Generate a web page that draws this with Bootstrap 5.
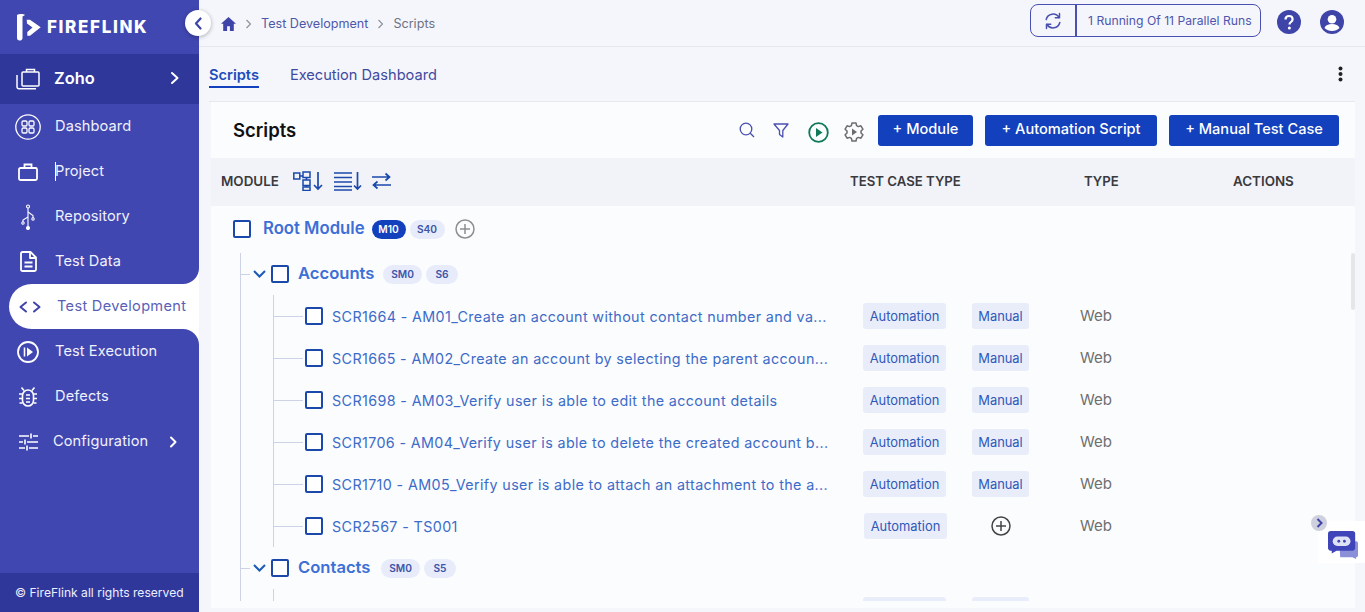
<!DOCTYPE html>
<html lang="en">
<head>
  <meta charset="UTF-8">
  <meta name="viewport" content="width=device-width, initial-scale=1.0">
  <title>FireFlink Scripts</title>
  <link rel="stylesheet" href="https://cdn.jsdelivr.net/npm/bootstrap@5.3.0/dist/css/bootstrap.min.css">
  <style>
    html, body { height: 100%; overflow: hidden; }
    body { font-family: Inter, "Liberation Sans", sans-serif; background: #f4f6fb; }
    .ff-app { height: 612px; }

    /* sidebar */
    .ff-side { width: 199px; background: #4147b1; color: #fff; position: relative; }
    .ff-logo { height: 54px; padding-left: 16px; gap: 4px; }
    .ff-logo-text { font-weight: 800; font-size: 17px; letter-spacing: 1.65px; padding-top: 2px; }
    .ff-project { height: 50px; background: #2f379b; padding-left: 16px; padding-right: 19px; padding-bottom: 2px; font-weight: 600; font-size: 16.4px; }
    .ff-project span { margin-left: 14px; }
    .ff-item { height: 45px; padding-left: 15px; font-size: 14.6px; color: #f0f1fb; letter-spacing: .1px; position: relative; }
    .ff-item svg { flex: none; }
    .ff-ico { width: 26px; display: flex; justify-content: center; margin-right: 14px; }
    .ff-caret { width: 1px; height: 19px; background: #fff; margin-right: -1px; }
    .ff-item.ff-on { background: #fff; color: #5a5fb5; margin-left: 9px; padding-left: 8px; border-radius: 23px 0 0 23px; letter-spacing: .3px; }
    .ff-item.ff-on::before, .ff-item.ff-on::after { content: ""; position: absolute; right: 0; width: 16px; height: 16px; background: #4147b1; box-shadow: 0 0 0 16px #fff; clip-path: inset(0); }
    .ff-item.ff-on::before { top: -16px; border-bottom-right-radius: 16px; }
    .ff-item.ff-on::after { bottom: -16px; border-top-right-radius: 16px; }
    .ff-conf { padding-right: 21px; }
    .ff-conf .ff-ico { margin-right: 12px; }
    .ff-side-foot { height: 39px; background: #2f379b; font-size: 12.1px; padding-left: 15px; padding-top: 2px; color: #eef; }
    .ff-collapse { position: absolute; left: 185px; top: 10px; width: 26px; height: 26px; border-radius: 50%; background: #fff; box-shadow: 0 1px 4px rgba(0,0,0,.3); z-index: 3; }

    /* top bar */
    .ff-main { min-width: 0; position: relative; }
    .ff-top { height: 47px; border-bottom: 1px solid #e6e8ef; padding-left: 22px; padding-right: 21px; }
    .ff-crumb { font-size: 12.6px; color: #4f58a8; gap: 9px; padding-top: 2px; }
    .ff-crumb .ff-last { color: #6d7283; }
    .ff-runs { height: 33px; margin-top: -5px; border: 1px solid #4a50b0; border-radius: 8px; color: #4f55ad; font-size: 12.2px; margin-right: 16px; }
    .ff-runs-ico { width: 46px; border-right: 2px solid #4a50b0; }
    .ff-runs-txt { width: 183px; padding-left: 11px; padding-top: 1px; }
    .ff-top-ico { gap: 19px; margin-top: -3px; }

    /* tabs */
    .ff-tabs { height: 55px; margin-left: 10px; margin-right: 10px; border-bottom: 1px solid #e6e8ef; padding-right: 12px; font-size: 14.6px; }
    .ff-tab { color: #3f4a9f; margin-right: 31px; padding: 2px 0 0; height: 25px; margin-top: 2px; }
    .ff-tab.ff-on { color: #1d4dbb; font-weight: 600; border-bottom: 2px solid #1340bd; }

    /* card */
    .ff-card { margin-left: 12px; margin-right: 10px; height: 506px; background: #fbfcfe; border: 0; border-radius: 0; }
    .ff-card-head { height: 56px; padding-left: 22px; padding-right: 16px; }
    .ff-title { font-size: 18.5px; font-weight: 600; color: #111; padding-top: 1px; }
    .ff-tools { margin-right: 2px; }
    .ff-tools svg:nth-child(1) { margin-right: 18px; }
    .ff-tools svg:nth-child(2) { margin-right: 19px; }
    .ff-tools svg:nth-child(3) { margin-right: 15px; }
    .ff-btn { background: #1340bd; color: #fff; font-size: 14.6px; font-weight: 500; height: 31px; padding: 0; border-radius: 3px; border: 0; margin-left: 12px; }
    .ff-btn:hover { background: #1340bd; color: #fff; }
    .ff-b1 { width: 95px; } .ff-b2 { width: 172px; } .ff-b3 { width: 170px; }
    .ff-thead { height: 48px; padding-bottom: 1px; background: #f1f3f9; font-size: 13.4px; font-weight: 600; color: #3a3a3e; }
    .ff-c1 { width: 639px; padding-left: 10px; gap: 10px; }
    .ff-c1 span { margin-right: 4px; }
    .ff-c2 { width: 234px; font-size: 13.2px; } .ff-c3 { width: 149px; font-size: 13.2px; }

    /* tree */
    .ff-tree { height: 395px; overflow: hidden; position: relative; }
    .ff-root { height: 47px; padding-left: 22px; padding-bottom: 1px; }
    .ff-check { width: 18px; height: 18px; border: 2px solid #1a49ab; border-radius: 2px; flex: none; background: #fff; }
    .ff-root-name { font-size: 16.7px; font-weight: 600; color: #3d6fd6; margin-left: 12px; margin-right: 7px; }
    .ff-pill { font-size: 10.2px; font-weight: 600; border-radius: 10px; background: #e8ecfa; color: #3d55a8; height: 19px; padding: 0; display: inline-flex; align-items: center; justify-content: center; margin-right: 4px; }
    .ff-pill.ff-dark { background: #1340bd; color: #fff; }
    .ff-p34 { width: 34px; } .ff-p35 { width: 35px; } .ff-p39 { width: 39px; } .ff-p32 { width: 32px; }
    .ff-root-add { margin-left: 6px; }
    .ff-branch { margin-left: 29px; border-left: 1px solid #cdd2e6; }
    .ff-mod { height: 42px; }
    .ff-dash { height: 1px; background: #cdd2e6; flex: none; }
    .ff-d10 { width: 9px; }
    .ff-d29 { width: 29px; margin-right: 2px; }
    .ff-fold { margin-left: 3px; margin-right: 5px; flex: none; }
    .ff-mod-name { font-size: 16.6px; font-weight: 600; color: #3d6fd6; margin-left: 9px; width: 85px; margin-top: -2px; }
    .ff-mod-short { width: 83px; }
    .ff-sub { margin-left: 32px; border-left: 1px solid #cdd2e6; }
    .ff-row { height: 42px; }
    .ff-name { width: 499px; margin-left: 9px; margin-right: 32px; font-size: 14.3px; color: #3d6bc8; letter-spacing: .38px; flex: none; padding-top: 1px; }
    .ff-tag { background: #e9edfa; color: #2f58b8; font-size: 12.9px; height: 26px; padding-top: 1px; border-radius: 3px; display: inline-flex; align-items: center; justify-content: center; flex: none; }
    .ff-t1 { width: 83px; margin-right: 26px; }
    .ff-t2 { width: 57px; margin-right: 51px; }
    .ff-t1b { margin-left: 1px; margin-right: 44px; }
    .ff-plus-cell { width: 20px; margin-right: 69px; flex: none; display: flex; }
    .ff-web { font-size: 15px; color: #6e6e6e; padding-top: 1px; }

    .ff-thumb { position: absolute; right: 10px; top: 253px; width: 4px; height: 57px; background: #e5e6e8; border-radius: 2px; }
    .ff-chat { position: absolute; right: 0; top: 521px; width: 47px; height: 42px; background: #fff; z-index: 2; padding-top: 6px; padding-left: 3px; }
    .ff-chat-btn { position: absolute; left: 1112px; top: 515px; width: 16px; height: 16px; border-radius: 50%; background: #ced1dd; z-index: 3; }
  </style>
</head>
<body>
  <div class="ff-app d-flex">
    <aside class="ff-side d-flex flex-column flex-shrink-0">
      <div class="ff-logo d-flex align-items-center">
        <svg width="27" height="28" viewBox="0 0 27 28"><path d="M1 2C3 1 7 .5 9 2L6.500 3.500V25C6.500 27 5 27.500 3.500 27.500 2 27.500 1 26.500 1 25Z" fill="#fff"/><path d="M10.700 6.700H14L24.700 14.300 14 22.700H11.300V19L16.500 14.500 11 10.500Z" fill="#fff"/></svg>
        <span class="ff-logo-text">FIREFLINK</span>
      </div>
      <div class="ff-project d-flex align-items-center">
        <svg width="24" height="24" viewBox="0 0 24 24" fill="none" stroke="#fff" stroke-width="1.500"><rect x="6" y="6" width="17" height="14" rx="1"/><path d="M10.500 6V3.500h8V6"/><path d="M1 9v11.500c0 1.500.8 2.300 2 2.300h17"/></svg>
        <span class="flex-grow-1">Zoho</span>
        <svg width="10" height="14" viewBox="0 0 10 14" fill="none" stroke="#fff" stroke-width="2" stroke-linecap="round" stroke-linejoin="round"><path d="M2 2l5.500 5L2 12"/></svg>
      </div>
      <div class="flex-grow-1">
        <div class="ff-item d-flex align-items-center">
          <span class="ff-ico"><svg width="26" height="26" viewBox="0 0 26 26" fill="none" stroke="#fff" stroke-width="1.300"><circle cx="13" cy="13" r="12.200"/><rect x="7" y="7" width="5" height="5" rx="1.200"/><rect x="14" y="7" width="5" height="5" rx="1.200"/><rect x="7" y="14" width="5" height="5" rx="1.200"/><rect x="14" y="14" width="5" height="5" rx="1.200"/></svg></span>
          Dashboard
        </div>
        <div class="ff-item d-flex align-items-center">
          <span class="ff-ico"><svg width="20" height="18" viewBox="0 0 20 18" fill="none" stroke="#fff" stroke-width="1.800"><rect x="1" y="5" width="18" height="12" rx="1.500"/><path d="M6.500 5V1.500h7V5"/></svg></span>
          <span class="ff-caret"></span>Project
        </div>
        <div class="ff-item d-flex align-items-center">
          <span class="ff-ico"><svg width="16" height="26" viewBox="0 0 16 26" fill="none" stroke="#fff" stroke-width="1.100"><circle cx="8" cy="2.500" r="1.500"/><path d="M8 4v19"/><circle cx="8" cy="24" r="1.500" fill="#fff"/><path d="M8 8l5 3.500V14M8 13l-5 3v2"/><circle cx="13" cy="15" r="1.200"/><circle cx="3" cy="19" r="1.200"/></svg></span>
          Repository
        </div>
        <div class="ff-item d-flex align-items-center">
          <span class="ff-ico"><svg width="17" height="21" viewBox="0 0 17 21" fill="none" stroke="#fff" stroke-width="1.800" stroke-linejoin="round"><path d="M2.500 1H10.500L16 6.500V18.500a1.500 1.500 0 0 1-1.500 1.500H2.500A1.500 1.500 0 0 1 1 18.500V2.500A1.500 1.500 0 0 1 2.500 1Z"/><path d="M10 1v6h6" /><path d="M4.500 11.500h8M4.500 15.500h8"/></svg></span>
          Test Data
        </div>
        <div class="ff-item ff-on d-flex align-items-center">
          <span class="ff-ico"><svg width="22" height="12" viewBox="0 0 22 12" fill="none" stroke="#3f45a8" stroke-width="2" stroke-linecap="round" stroke-linejoin="round"><path d="M7 1.500L1.500 6 7 10.500M15 1.500L20.500 6 15 10.500"/></svg></span>
          Test Development
        </div>
        <div class="ff-item d-flex align-items-center">
          <span class="ff-ico"><svg width="22" height="22" viewBox="0 0 22 22" fill="none" stroke="#fff" stroke-width="1.800"><circle cx="11" cy="11" r="10"/><path d="M7.500 6.500v9" stroke-width="1.600"/><path d="M10 6.500L16 11l-6 4.500Z" fill="#fff" stroke="none"/></svg></span>
          Test Execution
        </div>
        <div class="ff-item d-flex align-items-center">
          <span class="ff-ico"><svg width="20" height="21" viewBox="0 0 20 21" fill="none" stroke="#fff" stroke-width="1.600"><rect x="4.500" y="4" width="11" height="16" rx="5.500"/><path d="M6 4.500L3.500 1.500M14 4.500l2.500-3M4.500 8H1M4.500 12.500H1M4.500 17H1.500M15.500 8H19M15.500 12.500H19M15.500 17h3M8 9h4M8 12.500h4M8 16h4"/></svg></span>
          Defects
        </div>
        <div class="ff-item ff-conf d-flex align-items-center">
          <span class="ff-ico"><svg width="19" height="18" viewBox="0 0 19 18" fill="none" stroke="#fff" stroke-width="1.600"><path d="M0 3h10M14 3h5M0 9h4M8 9h11M0 15h6M10 15h9M12 .5v5M6 6.500v5M8 12.500v5"/></svg></span>
          <span class="flex-grow-1">Configuration</span>
          <svg width="9" height="12" viewBox="0 0 9 12" fill="none" stroke="#fff" stroke-width="2" stroke-linecap="round" stroke-linejoin="round"><path d="M2 1.500L6.500 6 2 10.500"/></svg>
        </div>
      </div>
      <div class="ff-side-foot d-flex align-items-center">© FireFlink all rights reserved</div>
      <div class="ff-collapse d-flex align-items-center justify-content-center">
        <svg width="9" height="13" viewBox="0 0 9 13" fill="none" stroke="#3f45a8" stroke-width="2.200" stroke-linecap="round" stroke-linejoin="round"><path d="M6.500 1.500L2 6.500l4.500 5"/></svg>
      </div>
    </aside>

    <main class="ff-main flex-grow-1">
      <div class="ff-top d-flex align-items-center justify-content-between">
        <div class="ff-crumb d-flex align-items-center">
          <svg width="15" height="14" viewBox="0 0 15 14" fill="#3f45a8"><path d="M7.500 0L0 6.800h2.200V14h3.900V9.200h2.800V14h3.900V6.800H15Z"/></svg>
          <svg width="7" height="10" viewBox="0 0 7 10" fill="none" stroke="#8b8e99" stroke-width="1.100"><path d="M1.500 1l4 4-4 4"/></svg>
          <span>Test Development</span>
          <svg width="7" height="10" viewBox="0 0 7 10" fill="none" stroke="#8b8e99" stroke-width="1.100"><path d="M1.500 1l4 4-4 4"/></svg>
          <span class="ff-last">Scripts</span>
        </div>
        <div class="d-flex align-items-center">
          <div class="ff-runs d-flex align-items-stretch">
            <div class="ff-runs-ico d-flex align-items-center justify-content-center">
              <svg width="18" height="18" viewBox="0 0 18 18" fill="none" stroke="#4a50b0" stroke-width="1.500" stroke-linecap="round" stroke-linejoin="round"><path d="M2.200 7.500A7 7 0 0 1 15 5.500M15.800 10.500A7 7 0 0 1 3 12.500"/><path d="M15.500 1.500v4.200h-4.200M2.500 16.500v-4.200h4.200"/></svg>
            </div>
            <div class="ff-runs-txt d-flex align-items-center">1 Running Of 11 Parallel Runs</div>
          </div>
          <div class="ff-top-ico d-flex align-items-center">
            <svg width="24" height="24" viewBox="0 0 24 24"><circle cx="12" cy="12" r="12" fill="#3f45a8"/><path d="M8.500 9.500c0-2.200 1.600-3.500 3.600-3.500s3.500 1.300 3.500 3.200c0 2.800-3.100 2.800-3.100 5.200" fill="none" stroke="#fff" stroke-width="2.200"/><circle cx="12.400" cy="18" r="1.500" fill="#fff"/></svg>
            <svg width="24" height="24" viewBox="0 0 24 24"><circle cx="12" cy="12" r="12" fill="#3f45a8"/><circle cx="12" cy="9.300" r="4.300" fill="#fff"/><path d="M4.500 18c1-3 4-4 7.500-4s6.500 1 7.500 4c-2 2-4.500 3-7.500 3s-5.500-1-7.500-3Z" fill="#fff"/></svg>
          </div>
        </div>
      </div>

      <div class="ff-tabs d-flex align-items-center">
        <div class="ff-tab ff-on">Scripts</div>
        <div class="ff-tab flex-grow-1">Execution Dashboard</div>
        <svg width="5" height="16" viewBox="0 0 5 16" fill="#222"><circle cx="2.500" cy="2.500" r="2"/><circle cx="2.500" cy="8" r="2"/><circle cx="2.500" cy="13.500" r="2"/></svg>
      </div>

      <div class="card ff-card">
        <div class="ff-card-head d-flex align-items-center">
          <div class="ff-title flex-grow-1">Scripts</div>
          <div class="ff-tools d-flex align-items-center">
            <svg width="16" height="16" viewBox="0 0 16 16" fill="none" stroke="#4a50b0" stroke-width="1.300"><circle cx="7" cy="7" r="5.800"/><path d="M11.300 11.300L15 15"/></svg>
            <svg width="16" height="15" viewBox="0 0 16 15" fill="none" stroke="#4a50b0" stroke-width="1.300" stroke-linejoin="round"><path d="M1 1h14L9.800 7.500v6.500L6.500 11.500V7.500Z"/></svg>
            <svg width="21" height="21" viewBox="0 0 21 21" fill="none" stroke="#0f7a55" stroke-width="1.800" class="mt-1"><circle cx="10.500" cy="10.500" r="9.300"/><path d="M8 6l6.500 4.500L8 15Z" fill="#0f7a55" stroke="none"/></svg>
            <svg width="20" height="20" viewBox="0 0 20 20" fill="none" stroke="#6c6c6c" stroke-width="1.500" stroke-linejoin="round" class="mt-1"><path d="M8 1h4l.6 2.600 1.800 1 2.500-.8 2 3.400-1.900 1.800v2l1.900 1.800-2 3.400-2.500-.8-1.800 1-.6 2.600H8l-.6-2.600-1.800-1-2.500.8-2-3.400L3 11V9L1.100 7.200l2-3.400 2.500.8 1.800-1Z"/><path d="M8 6.500l5 3.500-5 3.500Z" fill="#6c6c6c" stroke="none"/></svg>
          </div>
          <button type="button" class="btn ff-btn ff-b1">+ Module</button>
          <button type="button" class="btn ff-btn ff-b2">+ Automation Script</button>
          <button type="button" class="btn ff-btn ff-b3">+ Manual Test Case</button>
        </div>

        <div class="ff-thead d-flex align-items-center">
          <div class="ff-c1 d-flex align-items-center">
            <span>MODULE</span>
            <svg width="31" height="20" viewBox="0 0 31 20" fill="none" stroke="#1a49ab" stroke-width="1.500"><rect x=".8" y="2" width="6" height="6"/><rect x="10" y="1" width="7" height="5.500"/><rect x="10" y="9" width="7" height="5.500"/><rect x="10" y="16" width="7" height="3.500"/><path d="M7 5h3M13.500 6.500v2.500M13.500 14.500V16M25 1v16M21 14l4 4 4-4" stroke-width="1.700"/></svg>
            <svg width="28" height="20" viewBox="0 0 28 20" fill="none" stroke="#1a49ab" stroke-width="1.700"><path d="M0 2h18M0 6.500h18M0 11h18M0 15.500h18M0 19h18M23.500 1v16.500M20 14.500l3.500 3.500 3.500-3.500"/></svg>
            <svg width="19" height="18" viewBox="0 0 19 18" fill="none" stroke="#1a49ab" stroke-width="1.700"><path d="M0 5h17M13.500 1.500L17.500 5l-4 3.500M19 13H2M5.500 9.500L1.500 13l4 3.500"/></svg>
          </div>
          <div class="ff-c2">TEST CASE TYPE</div>
          <div class="ff-c3">TYPE</div>
          <div>ACTIONS</div>
        </div>

        <div class="ff-tree">
          <div class="ff-root d-flex align-items-center">
            <span class="ff-check"></span>
            <span class="ff-root-name">Root Module</span>
            <span class="badge ff-pill ff-dark ff-p34">M10</span>
            <span class="badge ff-pill ff-p35">S40</span>
            <svg class="ff-root-add" width="20" height="20" viewBox="0 0 20 20" fill="none" stroke="#8e8e8e" stroke-width="1.500"><circle cx="10" cy="10" r="9"/><path d="M10 5v10M5 10h10"/></svg>
          </div>
          <div class="ff-branch">
            <div class="ff-mod d-flex align-items-center">
              <span class="ff-dash ff-d10"></span>
              <svg class="ff-fold" width="13" height="8" viewBox="0 0 13 8" fill="none" stroke="#1a5ab8" stroke-width="2"><path d="M1 1l5.500 5.500L12 1"/></svg>
              <span class="ff-check"></span>
              <span class="ff-mod-name">Accounts</span>
              <span class="badge ff-pill ff-p39">SM0</span>
              <span class="badge ff-pill ff-p32">S6</span>
            </div>
            <div class="ff-sub">
              <div class="ff-row d-flex align-items-center"><span class="ff-dash ff-d29"></span><span class="ff-check"></span><span class="ff-name text-nowrap">SCR1664 - AM01_Create an account without contact number and va...</span><span class="ff-tag ff-t1">Automation</span><span class="ff-tag ff-t2">Manual</span><span class="ff-web">Web</span></div>
              <div class="ff-row d-flex align-items-center"><span class="ff-dash ff-d29"></span><span class="ff-check"></span><span class="ff-name text-nowrap">SCR1665 - AM02_Create an account by selecting the parent accoun...</span><span class="ff-tag ff-t1">Automation</span><span class="ff-tag ff-t2">Manual</span><span class="ff-web">Web</span></div>
              <div class="ff-row d-flex align-items-center"><span class="ff-dash ff-d29"></span><span class="ff-check"></span><span class="ff-name text-nowrap">SCR1698 - AM03_Verify user is able to edit the account details</span><span class="ff-tag ff-t1">Automation</span><span class="ff-tag ff-t2">Manual</span><span class="ff-web">Web</span></div>
              <div class="ff-row d-flex align-items-center"><span class="ff-dash ff-d29"></span><span class="ff-check"></span><span class="ff-name text-nowrap">SCR1706 - AM04_Verify user is able to delete the created account b...</span><span class="ff-tag ff-t1">Automation</span><span class="ff-tag ff-t2">Manual</span><span class="ff-web">Web</span></div>
              <div class="ff-row d-flex align-items-center"><span class="ff-dash ff-d29"></span><span class="ff-check"></span><span class="ff-name text-nowrap">SCR1710 - AM05_Verify user is able to attach an attachment to the a...</span><span class="ff-tag ff-t1">Automation</span><span class="ff-tag ff-t2">Manual</span><span class="ff-web">Web</span></div>
              <div class="ff-row d-flex align-items-center"><span class="ff-dash ff-d29"></span><span class="ff-check"></span><span class="ff-name text-nowrap">SCR2567 - TS001</span><span class="ff-tag ff-t1 ff-t1b">Automation</span>
                <span class="ff-plus-cell"><svg width="20" height="20" viewBox="0 0 20 20" fill="none" stroke="#444" stroke-width="1.500"><circle cx="10" cy="10" r="9"/><path d="M10 5v10M5 10h10"/></svg></span><span class="ff-web">Web</span></div>
            </div>
            <div class="ff-mod d-flex align-items-center">
              <span class="ff-dash ff-d10"></span>
              <svg class="ff-fold" width="13" height="8" viewBox="0 0 13 8" fill="none" stroke="#1a5ab8" stroke-width="2"><path d="M1 1l5.500 5.500L12 1"/></svg>
              <span class="ff-check"></span>
              <span class="ff-mod-name ff-mod-short">Contacts</span>
              <span class="badge ff-pill ff-p39">SM0</span>
              <span class="badge ff-pill ff-p32">S5</span>
            </div>
            <div class="ff-sub">
              <div class="ff-row d-flex align-items-center"><span class="ff-dash ff-d29"></span><span class="ff-check"></span><span class="ff-name"></span><span class="ff-tag ff-t1"></span><span class="ff-tag ff-t2"></span></div>
            </div>
          </div>
        </div>
      </div>

      <div class="ff-thumb"></div>
      <div class="ff-chat-btn d-flex align-items-center justify-content-center">
        <svg width="7" height="10" viewBox="0 0 7 10" fill="none" stroke="#3f45a8" stroke-width="2"><path d="M1.500 1l4 4-4 4"/></svg>
      </div>
      <div class="ff-chat d-flex align-items-center justify-content-center">
        <svg width="30" height="30" viewBox="0 0 32 32"><path d="M12 12h18a2 2 0 0 1 2 2v13a2 2 0 0 1-2 2v2l-4-2H13Z" fill="#8b8fd8"/><path d="M3 1h23a3 3 0 0 1 3 3v15a3 3 0 0 1-3 3H9l-5 3v-3H3a3 3 0 0 1-3-3V4a3 3 0 0 1 3-3Z" fill="#3f45b8"/><rect x="5" y="7" width="19" height="10" rx="5" fill="#dfe1f5"/><circle cx="11.500" cy="12" r="1.500" fill="#3f45b8"/><circle cx="17.500" cy="12" r="1.500" fill="#3f45b8"/></svg>
      </div>
    </main>
  </div>
  <script src="https://cdn.jsdelivr.net/npm/bootstrap@5.3.0/dist/js/bootstrap.bundle.min.js"></script>
</body>
</html>
